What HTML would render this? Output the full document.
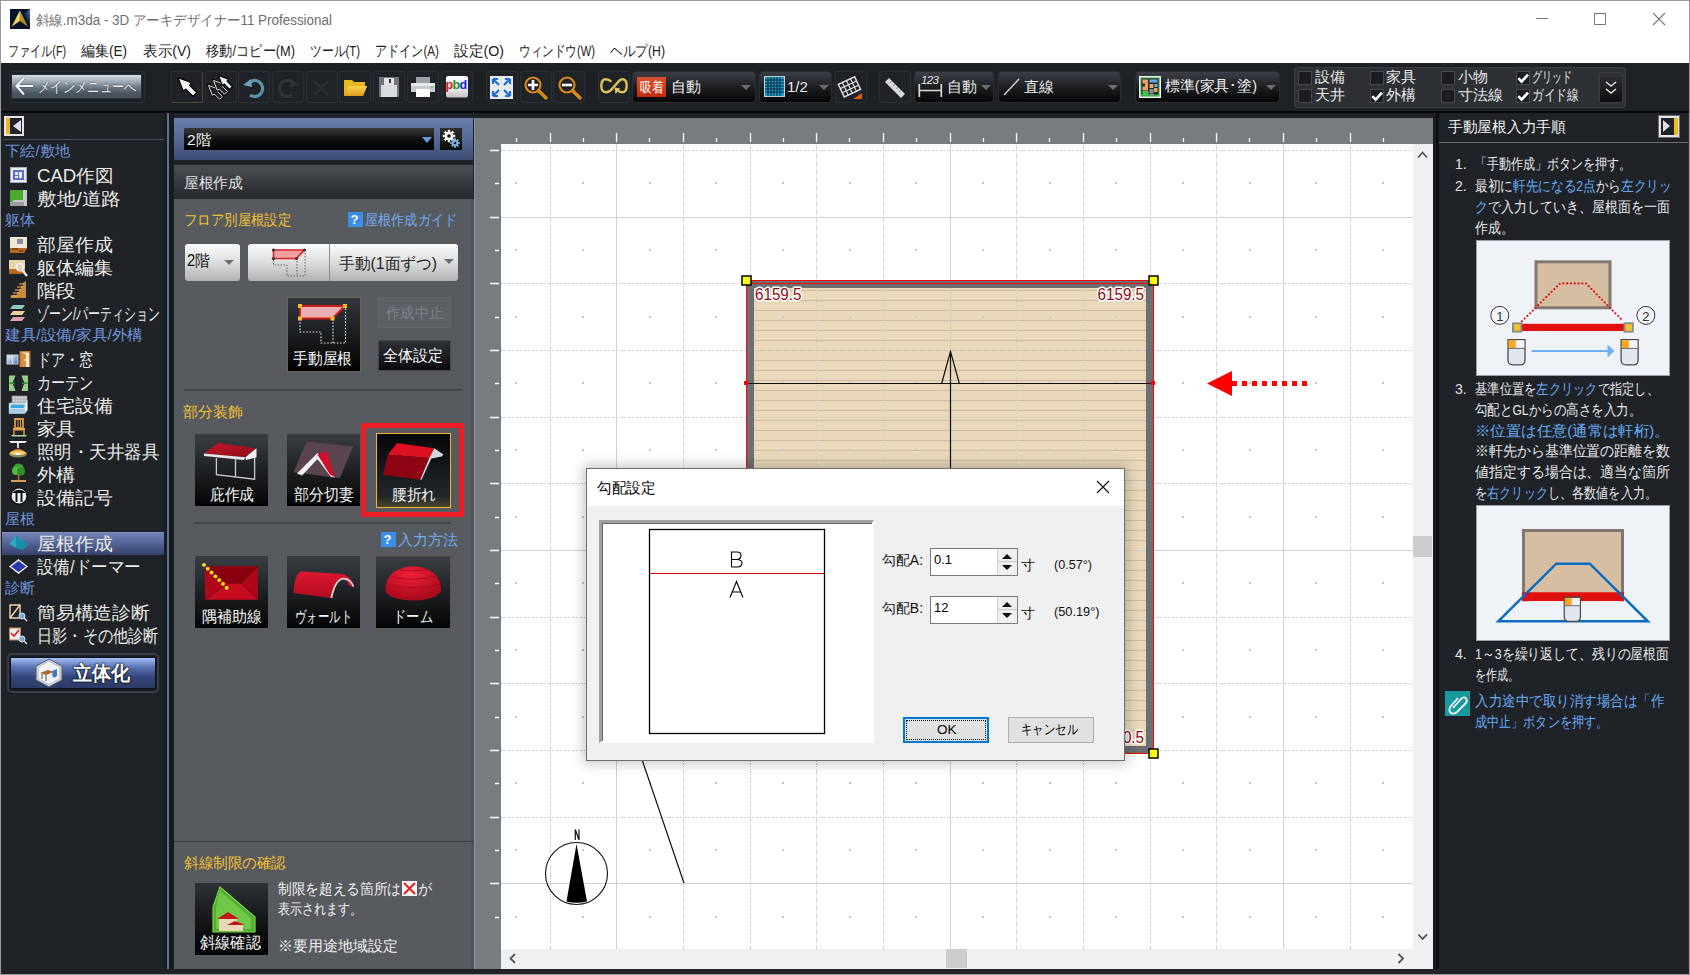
<!DOCTYPE html>
<html><head><meta charset="utf-8">
<style>
*{box-sizing:border-box;margin:0;padding:0}
html,body{width:1690px;height:975px;overflow:hidden;background:#fff;font-family:"Liberation Sans",sans-serif;position:relative}
.a{position:absolute}
svg.a{overflow:visible}
.t{position:absolute;white-space:nowrap;line-height:1}
.tbb{position:absolute;top:71px;width:32px;height:32px;border:1px solid #2b2f33;border-radius:3px;background:#1f2327}
.dd{position:absolute;top:71px;height:32px;border-radius:4px;border:1px solid #2a2e32;background:linear-gradient(#3c4046,#1a1c1f 55%,#050607)}
.ddar{position:absolute;top:84.5px;width:0;height:0;border-left:5px solid transparent;border-right:5px solid transparent;border-top:5px solid #6a6d71}
.cb{position:absolute;width:14px;height:14px;background:#1b1d20;border:1px solid #45484c}
.cb svg{position:absolute;left:-1px;top:-1px}
.cbt{font-size:14.5px;color:#e8e8e8}
</style></head><body>
<style>
.lh{position:absolute;left:5px;white-space:nowrap;line-height:1;font-size:14.5px;color:#6f95dc}
.li{position:absolute;left:37px;white-space:nowrap;line-height:1;font-size:18px;color:#eceae6}
</style>
<style>
.rbtn{position:absolute;width:73px;height:72px;background:linear-gradient(#3a3e43,#1e2124 50%,#040404)}
.rbl{font-size:15.5px;color:#f4f4f4}
</style>
<style>
.hn{position:absolute;left:1455px;white-space:nowrap;line-height:1;font-size:14px;color:#e4e4e4}
.hl{position:absolute;left:1475px;white-space:nowrap;line-height:1;font-size:14.5px;color:#e8e8e8}
.hl b{font-weight:normal;color:#68acf6}
</style>
<!-- TITLE BAR -->
<div class="a" style="left:0;top:0;width:1690px;height:1px;background:#9a9a9a"></div>
<div class="a" style="left:0;top:0;width:1px;height:975px;background:#9a9a9a"></div>
<div class="a" style="left:1689px;top:0;width:1px;height:975px;background:#9a9a9a"></div>
<svg class="a" style="left:10px;top:9px" width="20" height="20" viewBox="0 0 20 20"><defs><linearGradient id="lgb" x1="1" y1="0" x2="0.4" y2="0.7"><stop offset="0" stop-color="#4a7ac0"></stop><stop offset="1" stop-color="#06102a"></stop></linearGradient><linearGradient id="lgy" x1="0" y1="0" x2="0" y2="1"><stop offset="0" stop-color="#f8f0a0"></stop><stop offset="1" stop-color="#e8c040"></stop></linearGradient><linearGradient id="lgo" x1="0" y1="0" x2="0" y2="1"><stop offset="0" stop-color="#c8a830"></stop><stop offset="1" stop-color="#b07818"></stop></linearGradient></defs><rect width="20" height="20" fill="#06122a"></rect><path d="M20 0V16L13 6Z" fill="url(#lgb)"></path><path d="M9.9 1.5L1.6 17.8L9.9 12.1Z" fill="url(#lgy)"></path><path d="M9.9 1.5L18 17.8L9.9 12.1Z" fill="url(#lgo)"></path></svg>
<div class="t" style="left: 36px; top: 13px; font-size: 14px; color: rgb(110, 110, 110); --w: 296; transform: scaleX(0.9591); transform-origin: left center;">斜線.m3da - 3D アーキデザイナー11 Professional</div>
<div class="a" style="left:1536px;top:18px;width:12px;height:1px;background:#777"></div>
<div class="a" style="left:1594px;top:13px;width:12px;height:12px;border:1px solid #777"></div>
<svg class="a" style="left:1652px;top:12px" width="14" height="14" viewBox="0 0 14 14"><path d="M1 1L13 13M13 1L1 13" stroke="#777" stroke-width="1.1"></path></svg>
<!-- MENU -->
<div class="t" style="left: 8px; top: 44px; font-size: 14.5px; color: rgb(34, 34, 34); --w: 58; transform: scaleX(0.7387); transform-origin: left center;">ファイル(F)</div>
<div class="t" style="left: 81px; top: 44px; font-size: 14.5px; color: rgb(34, 34, 34); --w: 46; transform: scaleX(0.9322); transform-origin: left center;">編集(E)</div>
<div class="t" style="left: 143px; top: 44px; font-size: 14.5px; color: rgb(34, 34, 34); --w: 48; transform: scaleX(0.9728); transform-origin: left center;">表示(V)</div>
<div class="t" style="left: 206px; top: 44px; font-size: 14.5px; color: rgb(34, 34, 34); --w: 89; transform: scaleX(0.8832); transform-origin: left center;">移動/コピー(M)</div>
<div class="t" style="left: 310px; top: 44px; font-size: 14.5px; color: rgb(34, 34, 34); --w: 50; transform: scaleX(0.7872); transform-origin: left center;">ツール(T)</div>
<div class="t" style="left: 375px; top: 44px; font-size: 14.5px; color: rgb(34, 34, 34); --w: 64; transform: scaleX(0.8066); transform-origin: left center;">アドイン(A)</div>
<div class="t" style="left: 454px; top: 44px; font-size: 14.5px; color: rgb(34, 34, 34); --w: 50; transform: scaleX(0.9816); transform-origin: left center;">設定(O)</div>
<div class="t" style="left: 519px; top: 44px; font-size: 14.5px; color: rgb(34, 34, 34); --w: 76; transform: scaleX(0.7728); transform-origin: left center;">ウィンドウ(W)</div>
<div class="t" style="left: 610px; top: 44px; font-size: 14.5px; color: rgb(34, 34, 34); --w: 55; transform: scaleX(0.8443); transform-origin: left center;">ヘルプ(H)</div>
<!-- TOOLBAR -->
<div class="a" style="left:1px;top:63px;width:1688px;height:48px;background:#1e2226"></div>
<div class="a" style="left:1px;top:111px;width:1688px;height:2px;background:#08090a"></div>
<div class="a" style="left:9px;top:71px;width:136px;height:32px;border:1px solid #2b2f34;border-radius:3px"></div>
<div class="a" style="left:11px;top:74px;width:131px;height:25px;background:linear-gradient(#d4dce6,#a8b2bc 25%,#6c7884 55%,#4a5560 80%,#46515c);border:1px solid #2a3038"></div>
<svg class="a" style="left:14px;top:76px" width="20" height="20" viewBox="0 0 20 20"><path d="M2.5 10H19M10 2L2.5 10L10 18.5" fill="none" stroke="#2a2e34" stroke-width="3.6" opacity="0.35"></path><path d="M2.5 10H19M10 2L2.5 10L10 18.5" fill="none" stroke="#f4f4f4" stroke-width="2.2"></path></svg>
<div class="t" style="left: 37.5px; top: 79px; font-size: 15px; color: rgb(242, 242, 242); text-shadow: rgb(34, 34, 34) 0px 0px 1.5px; --w: 98.5; transform: scaleX(0.8208); transform-origin: left center;">メインメニューへ</div>
<div class="tbb" style="left:171px"></div>
<div class="a" style="left:172px;top:102px;width:30px;height:1px;background:#4f4a36"></div><div class="a" style="left:202px;top:72px;width:1px;height:31px;background:#4f4a36"></div>
<svg class="a" style="left:170px;top:68px" width="70" height="38" viewBox="170 68 70 38"><path d="M178.10 77.60L191.49 82.64L189.64 85.36L196.82 92.54L193.04 96.32L185.86 89.14L183.14 90.99Z" fill="#f2f2f6" stroke="#000" stroke-width="1.2" stroke-linejoin="round"></path></svg>
<div class="tbb" style="left:205px"></div>
<svg class="a" style="left:170px;top:68px" width="70" height="38" viewBox="170 68 70 38"><path d="M208.50 85.40L218.44 89.14L217.07 91.16L222.40 96.49L219.59 99.30L214.26 93.97L212.24 95.34Z" fill="#1f2327" stroke="#000" stroke-width="2.2"></path><path d="M208.50 85.40L218.44 89.14L217.07 91.16L222.40 96.49L219.59 99.30L214.26 93.97L212.24 95.34Z" fill="#1f2327" stroke="#d8d8d8" stroke-width="1"></path><path d="M213.50 80.40L223.44 84.14L222.07 86.16L227.40 91.49L224.59 94.30L219.26 88.97L217.24 90.34Z" fill="#1f2327" stroke="#000" stroke-width="2.2"></path><path d="M213.50 80.40L223.44 84.14L222.07 86.16L227.40 91.49L224.59 94.30L219.26 88.97L217.24 90.34Z" fill="#1f2327" stroke="#e0e0e0" stroke-width="1"></path><path d="M218.50 75.50L228.44 79.24L227.07 81.26L232.40 86.59L229.59 89.40L224.26 84.07L222.24 85.44Z" fill="#f4f4f4" stroke="#000" stroke-width="1.2"></path></svg>
<div class="tbb" style="left:238px"></div>
<svg class="a" style="left:242px;top:76px" width="24" height="24" viewBox="0 0 24 24"><path d="M6 8 A8 8 0 1 1 8 19" fill="none" stroke="#5f93ad" stroke-width="3.2"></path><path d="M1 9L9 3L10 11Z" fill="#6fa3bd"></path></svg>
<div class="tbb" style="left:272px"></div>
<svg class="a" style="left:276px;top:76px" width="24" height="24" viewBox="0 0 24 24"><path d="M18 8 A8 8 0 1 0 16 19" fill="none" stroke="#31353a" stroke-width="3"></path><path d="M23 9L15 3L14 11Z" fill="#31353a"></path></svg>
<div class="tbb" style="left:306px"></div>
<svg class="a" style="left:311px;top:78px" width="20" height="20" viewBox="0 0 20 20"><path d="M3 3L17 17M17 3L3 17" stroke="#2c3035" stroke-width="2.4"></path></svg>
<div class="tbb" style="left:339px"></div>
<svg class="a" style="left:343px;top:76px" width="25" height="22" viewBox="0 0 25 22"><path d="M1 4H9L11 6H22V10H5L1 20Z" fill="#e8b820"></path><path d="M5 10H24L20 20H1Z" fill="#f2b43a"></path><path d="M5 10H24L20 20H1Z" fill="url(#fg)"></path><defs><linearGradient id="fg" x1="0" y1="0" x2="0" y2="1"><stop offset="0" stop-color="#ffd24a"></stop><stop offset="1" stop-color="#d99a20"></stop></linearGradient></defs></svg>
<div class="tbb" style="left:373px"></div>
<svg class="a" style="left:378px;top:76px" width="22" height="22" viewBox="0 0 22 22"><rect x="1" y="1" width="20" height="20" fill="#6f757b"></rect><rect x="3" y="9" width="16" height="12" fill="#d9dcdf"></rect><rect x="6" y="2" width="10" height="7" fill="#e4e6e8"></rect><rect x="11" y="3" width="2" height="4" fill="#333"></rect></svg>
<div class="tbb" style="left:407px"></div>
<svg class="a" style="left:410px;top:76px" width="26" height="22" viewBox="0 0 26 22"><rect x="6" y="1" width="14" height="6" fill="#9aa0a6"></rect><rect x="1" y="7" width="24" height="9" fill="#c8ccd0"></rect><rect x="1" y="7" width="24" height="3" fill="#e6e8ea"></rect><rect x="6" y="13" width="14" height="8" fill="#fff"></rect><rect x="21" y="10" width="2" height="2" fill="#5c5"></rect></svg>
<div class="tbb" style="left:441px"></div>
<svg class="a" style="left:446px;top:76px" width="22" height="22" viewBox="0 0 22 22"><defs><linearGradient id="pbg" x1="0" y1="0" x2="0" y2="1"><stop offset="0" stop-color="#ffffff"></stop><stop offset="0.6" stop-color="#e8e8e8"></stop><stop offset="1" stop-color="#c4c4c4"></stop></linearGradient></defs><rect x="0" y="0" width="22" height="21.5" rx="2" fill="url(#pbg)"></rect><text x="-0.5" y="13.3" font-family="Liberation Sans" font-weight="bold" font-size="12.5" letter-spacing="-0.6" fill="#d81818">p<tspan fill="#189828">b</tspan><tspan fill="#2020e0">d</tspan></text></svg>
<div class="tbb" style="left:486px"></div>
<svg class="a" style="left:490px;top:76px" width="23" height="23" viewBox="0 0 23 23"><rect x="0" y="0" width="23" height="23" fill="#e7ebef"></rect><g stroke="#1f6fd6" stroke-width="2.2" fill="none"><path d="M3 3L9 9M3 3H8M3 3V8"></path><path d="M20 3L14 9M20 3H15M20 3V8"></path><path d="M3 20L9 14M3 20H8M3 20V15"></path><path d="M20 20L14 14M20 20H15M20 20V15"></path></g></svg>
<div class="tbb" style="left:520px"></div>
<svg class="a" style="left:523px;top:75px" width="26" height="26" viewBox="0 0 26 26"><circle cx="10" cy="10" r="7.5" fill="none" stroke="#d98a14" stroke-width="2.2"></circle><path d="M15.5 15.5L23 23" stroke="#d98a14" stroke-width="3.4" stroke-linecap="round"></path><path d="M10 5V15M5 10H15" stroke="#fff" stroke-width="2.6"></path></svg>
<div class="tbb" style="left:553px"></div>
<svg class="a" style="left:557px;top:75px" width="26" height="26" viewBox="0 0 26 26"><circle cx="10" cy="10" r="7.5" fill="none" stroke="#d98a14" stroke-width="2.2"></circle><path d="M15.5 15.5L23 23" stroke="#d98a14" stroke-width="3.4" stroke-linecap="round"></path><path d="M5 10H15" stroke="#fff" stroke-width="2.6"></path></svg>
<div class="tbb" style="left:598px"></div>
<svg class="a" style="left:600px;top:78px" width="28" height="17" viewBox="0 0 28 17"><path d="M11.3 3.6C9.5 1.8 7.5 1.3 5.5 1.3C2.5 1.3 1.3 4.5 1.3 7.8C1.3 11.5 3 14.3 6 14.3C9 14.3 10.5 12.8 12.2 10.8L19 3C20.3 1.7 21.5 1.3 22.5 1.3C25.5 1.3 26.7 4.3 26.7 7.8C26.7 11.5 25 14.3 22 14.3C20.3 14.3 19.2 13.6 18.3 12.6" fill="none" stroke="#dcc058" stroke-width="2.5"></path><path d="M14.6 9.6L20.2 10.6L15.5 16Z" fill="#e8cc60"></path></svg>
<div class="dd" style="left:632px;width:124px"></div>
<div class="a" style="left:637px;top:77px;width:29px;height:20px;background:linear-gradient(#d85434,#c42a04)"></div>
<div class="t" style="left: 639.5px; top: 79.5px; font-size: 14px; color: rgb(255, 255, 255); --w: 23.5; transform: scaleX(0.8393); transform-origin: left center;">吸着</div>
<div class="t" style="left:671px;top:79px;font-size:15px;color:#eee">自動</div>
<div class="ddar" style="left:741px"></div>
<div class="dd" style="left:759px;width:73px"></div>
<svg class="a" style="left:764px;top:76px" width="21" height="21" viewBox="0 0 21 21"><rect x="0.5" y="0.5" width="20" height="20" fill="#1aa0d0" stroke="#ccc"></rect><g stroke="#123" stroke-width="1"><path d="M4 1V20M7 1V20M10 1V20M13 1V20M16 1V20M1 4H20M1 7H20M1 10H20M1 13H20M1 16H20"></path></g></svg>
<div class="t" style="left:787px;top:79px;font-size:15px;color:#eee">1/2</div>
<div class="ddar" style="left:818.5px"></div>
<div class="tbb" style="left:835px"></div>
<svg class="a" style="left:838px;top:75px" width="26" height="26" viewBox="0 0 26 26"><g transform="rotate(-25 11 11)"><rect x="2" y="5" width="18" height="14" fill="none" stroke="#ddd" stroke-width="1.5"></rect><path d="M6.5 5V19M11 5V19M15.5 5V19M2 9.7H20M2 14.3H20" stroke="#ddd" stroke-width="1.2"></path></g><path d="M15 24L24 18V24Z" fill="#e06010"></path></svg>
<div class="tbb" style="left:879px"></div>
<svg class="a" style="left:882px;top:75px" width="26" height="26" viewBox="0 0 26 26"><path d="M3 7L7 3L23 19L19 23Z" fill="#d8d8d8"></path><path d="M8 8L10 6M11 11L13 9M14 14L16 12M17 17L19 15" stroke="#888" stroke-width="0.8"></path></svg>
<div class="dd" style="left:914px;width:80px"></div>
<svg class="a" style="left:917px;top:74px" width="28" height="26" viewBox="0 0 28 26"><text x="4" y="10.2" font-family="Liberation Sans" font-style="italic" font-size="11.5" letter-spacing="-0.6" fill="#e4e4e4">123</text><path d="M2.3 10V23M24.3 10V23M2.3 16.5H24.3" stroke="#dcdcdc" stroke-width="1.7"></path></svg>
<div class="t" style="left:947px;top:79px;font-size:15px;color:#eee">自動</div>
<div class="ddar" style="left:981px"></div>
<div class="dd" style="left:998px;width:123px"></div>
<svg class="a" style="left:1002px;top:78px" width="20" height="18" viewBox="0 0 20 18"><path d="M2 17L17 1" stroke="#ccc" stroke-width="1.5"></path></svg>
<div class="t" style="left:1024px;top:79px;font-size:15px;color:#eee">直線</div>
<div class="ddar" style="left:1107.5px"></div>
<div class="dd" style="left:1135px;width:145px"></div>
<svg class="a" style="left:1139px;top:76px" width="22" height="22" viewBox="0 0 22 22"><rect x="0.7" y="0.7" width="20.6" height="20.6" fill="#3cb048" stroke="#f4f4f4" stroke-width="1.4"></rect><rect x="2.5" y="2.5" width="17" height="16" fill="#262a2c"></rect><path d="M3.5 3.5H9V14.5H3.5V10.5H6V7.5H3.5Z" fill="#e8a060"></path><rect x="10.5" y="3.5" width="8" height="3" fill="#60a8e8"></rect><rect x="15.5" y="8" width="3" height="3" fill="#60a8e8"></rect><rect x="10.5" y="8" width="4" height="4" fill="#e8a060"></rect><rect x="15" y="12" width="3.5" height="4" fill="#e8a060"></rect><rect x="10.5" y="13" width="4" height="4" fill="#8a9098"></rect><rect x="3.5" y="15" width="6" height="4" fill="#4cc050"></rect><rect x="10.5" y="17.5" width="4" height="1.5" fill="#8a9098"></rect></svg>
<div class="t" style="left: 1164.5px; top: 79px; font-size: 14.5px; color: rgb(238, 238, 238); --w: 92; transform: scaleX(0.9927); transform-origin: left center;">標準(家具･塗)</div>
<div class="ddar" style="left:1266px"></div>
<!-- checkbox group -->
<div class="a" style="left:1294px;top:67px;width:332px;height:41px;background:#2d3034;border:1px solid #3a3d41;border-radius:3px"></div>
<div class="cb" style="left:1298px;top:71px"></div><div class="t cbt" style="left:1315px;top:70px">設備</div>
<div class="cb" style="left:1298px;top:89px"></div><div class="t cbt" style="left:1315px;top:88px">天井</div>
<div class="cb" style="left:1370px;top:71px"></div><div class="t cbt" style="left:1386px;top:70px">家具</div>
<div class="cb" style="left:1370px;top:89px"><svg width="14" height="14" viewBox="0 0 14 14"><path d="M2.3 7.2L5.6 10.6L12 3.6" fill="none" stroke="#fff" stroke-width="2.6"></path></svg></div><div class="t cbt" style="left:1386px;top:88px">外構</div>
<div class="cb" style="left:1441px;top:71px"></div><div class="t cbt" style="left:1458px;top:70px">小物</div>
<div class="cb" style="left:1441px;top:89px"></div><div class="t cbt" style="left:1458px;top:88px">寸法線</div>
<div class="cb" style="left:1516px;top:71px"><svg width="14" height="14" viewBox="0 0 14 14"><path d="M2.3 7.2L5.6 10.6L12 3.6" fill="none" stroke="#fff" stroke-width="2.6"></path></svg></div><div class="t cbt" style="left: 1532px; top: 70px; --w: 40; transform: scaleX(0.6667); transform-origin: left center;">グリッド</div>
<div class="cb" style="left:1516px;top:89px"><svg width="14" height="14" viewBox="0 0 14 14"><path d="M2.3 7.2L5.6 10.6L12 3.6" fill="none" stroke="#fff" stroke-width="2.6"></path></svg></div><div class="t cbt" style="left: 1532px; top: 88px; --w: 47; transform: scaleX(0.7833); transform-origin: left center;">ガイド線</div>
<div class="a" style="left:1599px;top:72px;width:24px;height:31px;background:linear-gradient(#303338,#0c0d0e);border:1px solid #3a3d41;border-radius:2px"></div>
<svg class="a" style="left:1604px;top:79px" width="14" height="18" viewBox="0 0 14 18"><path d="M2 3L7 7L12 3M2 10L7 14L12 10" fill="none" stroke="#ddd" stroke-width="1.6"></path></svg>
<!-- LEFT NAV -->
<div class="a" style="left:1px;top:113px;width:166px;height:857px;background:#1f2328"></div>
<div class="a" style="left:164px;top:113px;width:3px;height:857px;background:#1a1d21"></div>
<div class="a" style="left:167px;top:113px;width:2px;height:857px;background:#5c6f96"></div>
<div class="a" style="left:169px;top:113px;width:5px;height:857px;background:#181b1e"></div>
<div class="a" style="left:1px;top:969px;width:1688px;height:5px;background:#1f2328"></div>
<div class="a" style="left:0;top:974px;width:1690px;height:1px;background:#9a9a9a"></div>
<!-- toggle -->
<div class="a" style="left:4px;top:116px;width:20px;height:20px;border:2px solid #e6e6e6;background:#1f2328"></div>
<div class="a" style="left:6px;top:118px;width:4px;height:16px;background:#f0b820"></div>
<div class="a" style="left:13px;top:120px;width:0;height:0;border-top:6px solid transparent;border-bottom:6px solid transparent;border-right:8px solid #dde0ea"></div>
<div class="a" style="left:2px;top:139px;width:162px;height:1px;background:#4a4e54"></div>
<div class="lh" style="top: 144px; --w: 65; transform: scaleX(1.0151); transform-origin: left center;">下絵/敷地</div>
<div class="li" style="top: 167px; --w: 76.5; transform: scaleX(1.0336); transform-origin: left center;">CAD作図</div>
<div class="li" style="top: 190px; --w: 84; transform: scaleX(1.0907); transform-origin: left center;">敷地/道路</div>
<div class="lh" style="top: 213px; --w: 30; transform: scaleX(1); transform-origin: left center;">躯体</div>
<div class="li" style="top: 236px; --w: 75.5; transform: scaleX(1.0486); transform-origin: left center;">部屋作成</div>
<div class="li" style="top: 259px; --w: 75.5; transform: scaleX(1.0486); transform-origin: left center;">躯体編集</div>
<div class="li" style="top: 282px; --w: 39; transform: scaleX(1.0833); transform-origin: left center;">階段</div>
<div class="li" style="top: 305px; --w: 123; transform: scaleX(0.6648); transform-origin: left center;">ゾーン/パーティション</div>
<div class="lh" style="top: 328px; --w: 138; transform: scaleX(1.0447); transform-origin: left center;">建具/設備/家具/外構</div>
<div class="li" style="top: 351px; --w: 56.5; transform: scaleX(0.7847); transform-origin: left center;">ドア・窓</div>
<div class="li" style="top: 374px; --w: 56.5; transform: scaleX(0.7847); transform-origin: left center;">カーテン</div>
<div class="li" style="top: 397px; --w: 75.5; transform: scaleX(1.0486); transform-origin: left center;">住宅設備</div>
<div class="li" style="top: 420px; --w: 38.5; transform: scaleX(1.0694); transform-origin: left center;">家具</div>
<div class="li" style="top: 443px; --w: 122.5; transform: scaleX(0.9722); transform-origin: left center;">照明・天井器具</div>
<div class="li" style="top: 466px; --w: 38.5; transform: scaleX(1.0694); transform-origin: left center;">外構</div>
<div class="li" style="top: 489px; --w: 75.5; transform: scaleX(1.0486); transform-origin: left center;">設備記号</div>
<div class="lh" style="top: 512px; --w: 30; transform: scaleX(1); transform-origin: left center;">屋根</div>
<div class="a" style="left:2px;top:532px;width:162px;height:23px;background:linear-gradient(#7384b8,#4c5b8c 60%,#36426c);border-top:1px solid #8090c0"></div>
<div class="li" style="top: 535px; --w: 75.5; transform: scaleX(1.0486); transform-origin: left center;">屋根作成</div>
<div class="li" style="top: 558px; --w: 103.5; transform: scaleX(0.9158); transform-origin: left center;">設備/ドーマー</div>
<div class="lh" style="top: 581px; --w: 30; transform: scaleX(1); transform-origin: left center;">診断</div>
<div class="li" style="top: 604px; --w: 112.5; transform: scaleX(1.0417); transform-origin: left center;">簡易構造診断</div>
<div class="li" style="top: 627px; --w: 121.5; transform: scaleX(0.8438); transform-origin: left center;">日影・その他診断</div>
<!-- icons -->
<svg class="a" style="left:10px;top:167px" width="17" height="16" viewBox="0 0 17 16"><rect x="0.5" y="0.5" width="16" height="15" fill="#e8ecf4" stroke="#aab"></rect><rect x="3" y="3" width="11" height="10" fill="#5b6fc8"></rect><path d="M5 5H8V8H5ZM9 5H12V11H9ZM5 9H8V11H5Z" fill="#e8ecf8"></path></svg>
<svg class="a" style="left:10px;top:190px" width="17" height="16" viewBox="0 0 17 16"><rect x="0" y="0" width="17" height="16" fill="#c8cacc"></rect><path d="M0 0H13V10L4 10L0 14Z" fill="#4caa30"></path><path d="M0 12H14V16H0Z" fill="#9a9c9e"></path></svg>
<svg class="a" style="left:10px;top:237px" width="17" height="16" viewBox="0 0 17 16"><rect x="0" y="0" width="17" height="12" fill="#f0e8d4"></rect><rect x="7" y="2" width="6" height="5" fill="#8890a0"></rect><path d="M0 11H17L14 16H0Z" fill="#b86820"></path><path d="M2 12H8M9 14H13" stroke="#5a3010" stroke-width="1"></path></svg>
<svg class="a" style="left:9px;top:259px" width="20" height="18" viewBox="0 0 20 18"><rect x="0" y="1" width="16" height="12" fill="#e8d4a8"></rect><path d="M0 10H16L13 15H0Z" fill="#b86820"></path><circle cx="11" cy="8" r="3.5" fill="none" stroke="#eee" stroke-width="2"></circle><path d="M13 11L18 17" stroke="#eee" stroke-width="2.2"></path></svg>
<svg class="a" style="left:9px;top:281px" width="18" height="17" viewBox="0 0 18 17"><path d="M17 0V17H1L3 14H8V11H10V8H12V5H14V2Z" fill="#c88a3a"></path><path d="M2 15H8M4 12H10M6 9H12M8 6H14M10 3H15" stroke="#f0b060" stroke-width="1.2"></path></svg>
<svg class="a" style="left:9px;top:305px" width="18" height="17" viewBox="0 0 18 17"><path d="M4 0H16L13 4H1Z" fill="#8cc8c0"></path><path d="M4 6H16L13 10H1Z" fill="#e8d0a0"></path><path d="M4 12H16L13 16H1Z" fill="#e0a0b0"></path></svg>
<svg class="a" style="left:6px;top:350px" width="26" height="18" viewBox="0 0 26 18"><defs><linearGradient id="wg" x1="0" y1="0" x2="1" y2="1"><stop offset="0" stop-color="#f0f4fa"></stop><stop offset="1" stop-color="#4a78b8"></stop></linearGradient></defs><rect x="1" y="5" width="11" height="9" fill="url(#wg)" stroke="#c8d0d8" stroke-width="1"></rect><path d="M6.5 5V14" stroke="#e8eef4" stroke-width="1"></path><rect x="13.5" y="1" width="11" height="16" fill="#c07828"></rect><rect x="15" y="2.5" width="8" height="14.5" fill="#f4ead8"></rect><path d="M15 2.5L20 4.5V17H15Z" fill="#d89040"></path><circle cx="19" cy="10" r="0.8" fill="#fff"></circle></svg>
<svg class="a" style="left:8px;top:375px" width="21" height="17" viewBox="0 0 21 17"><path d="M1 0.5H7.5Q6 5 4.5 8Q6 11 7.5 16H1Z" fill="#98cc88"></path><path d="M13.5 0.5H20V16H13.5Q15 11 16.5 8Q15 5 13.5 0.5Z" fill="#98cc88"></path><path d="M1.5 8L7 8.5M14 8.5L19.5 8" stroke="#2c8a38" stroke-width="1.6"></path></svg>
<svg class="a" style="left:8px;top:395px" width="20" height="19" viewBox="0 0 20 19"><path d="M4 1H19V10H4Z" fill="#d8dce0" stroke="#888" stroke-width="0.8"></path><path d="M7 1V10M10 1V10M13 1V10M16 1V10M4 4H19M4 7H19" stroke="#999" stroke-width="0.6"></path><path d="M1 8H17L19.5 5V15L17 18.5H1Z" fill="#eef2f6" stroke="#8aa" stroke-width="0.6"></path><path d="M3 9.5H16L17 11L15.5 13H2.5Z" fill="#38a8e0"></path><path d="M1 13.5H17V18.5H1Z" fill="#a8cce8"></path></svg>
<svg class="a" style="left:10px;top:418px" width="18" height="19" viewBox="0 0 18 19"><path d="M1 17H17L16 18.5H2Z" fill="#a8d8a0"></path><path d="M5 1H13V10H5Z" fill="none" stroke="#d89848" stroke-width="1.8"></path><path d="M8 2V9M10.5 2V9" stroke="#d89848" stroke-width="1"></path><path d="M3 10H15V12.5H3Z" fill="#e8a850"></path><path d="M4 12.5V17M14 12.5V17" stroke="#c88030" stroke-width="1.8"></path></svg>
<svg class="a" style="left:8px;top:440px" width="20" height="19" viewBox="0 0 20 19"><path d="M1 1H19L17 3H3Z" fill="#f0f0f0"></path><path d="M9 3H11V8H9Z" fill="#ccc"></path><ellipse cx="10" cy="14" rx="9" ry="3.5" fill="#f8e8a0" opacity="0.5"></ellipse><path d="M2 13Q10 5 18 13Z" fill="#f08830"></path><ellipse cx="10" cy="13" rx="8" ry="2" fill="#ffcc70"></ellipse><rect x="8" y="13" width="4" height="2" fill="#fff"></rect></svg>
<svg class="a" style="left:10px;top:463px" width="17" height="20" viewBox="0 0 17 20"><circle cx="8.5" cy="6" r="5.5" fill="#3aa030"></circle><circle cx="6" cy="8" r="4" fill="#58b840"></circle><circle cx="11" cy="8.5" r="4" fill="#2c9028"></circle><rect x="7.8" y="11" width="1.6" height="6" fill="#a86828"></rect><rect x="1" y="17" width="15" height="2" fill="#d8a060"></rect></svg>
<svg class="a" style="left:10px;top:487px" width="18" height="18" viewBox="0 0 18 18"><circle cx="9" cy="9" r="8.2" fill="#f4f4f4" stroke="#111" stroke-width="1.6"></circle><path d="M2.5 6H15.5A8 8 0 0 0 2.5 6Z" fill="#111"></path><rect x="5.5" y="5" width="2" height="10" fill="#111"></rect><rect x="10.5" y="5" width="2" height="10" fill="#111"></rect></svg>
<svg class="a" style="left:9px;top:536px" width="19" height="14" viewBox="0 0 19 14"><path d="M0 8L7 0L14 4L7 12Z" fill="#28a8c0"></path><path d="M7 0L19 8L14 14L7 12Z" fill="#1890a8"></path></svg>
<svg class="a" style="left:9px;top:559px" width="19" height="15" viewBox="0 0 19 15"><path d="M0 7.5L9.5 0L19 7.5L9.5 15Z" fill="#e8e8f0"></path><path d="M2 7.5L9.5 2L17 7.5L9.5 13Z" fill="#2838a8"></path></svg>
<svg class="a" style="left:9px;top:604px" width="19" height="17" viewBox="0 0 19 17"><path d="M1 1H11V14H1Z" fill="none" stroke="#f0d8b0" stroke-width="1.4"></path><path d="M1 14L11 1" stroke="#f0d8b0" stroke-width="1.4"></path><circle cx="13" cy="12" r="3" fill="#7aa8e0" stroke="#d0e0f0"></circle><path d="M15 14L18 17" stroke="#d0e0f0" stroke-width="1.4"></path></svg>
<svg class="a" style="left:9px;top:627px" width="19" height="17" viewBox="0 0 19 17"><rect x="0.5" y="1" width="11" height="12" fill="#eee" stroke="#c88040"></rect><path d="M2 6L5 9L10 3" stroke="#d02020" stroke-width="1.6" fill="none"></path><circle cx="13" cy="12" r="3" fill="#7aa8e0" stroke="#d0e0f0"></circle><path d="M15 14L18 17" stroke="#d0e0f0" stroke-width="1.4"></path></svg>
<!-- 立体化 -->
<div class="a" style="left:7px;top:653px;width:152px;height:40px;border:2px solid #3a3e44;border-radius:5px;background:#1a1d21"></div>
<div class="a" style="left:10px;top:657px;width:146px;height:32px;background:linear-gradient(#a4c0f6,#5c74b4 30%,#34467c 62%,#2c3a64);border:1px solid #0c1020"></div>
<svg class="a" style="left:34px;top:658px" width="30" height="30" viewBox="0 0 30 30"><path d="M15 1L28 8V22L15 29L2 22V8Z" fill="#c8ccd4" stroke="#555a66"></path><path d="M15 4L25 9.5V20.5L15 26L5 20.5V9.5Z" fill="#f0f2f6"></path><path d="M6 15L14 12L20 14L12 17Z" fill="#a86a30"></path><path d="M8 16V21M12 17V23M19 15V19" stroke="#555" stroke-width="1"></path><path d="M18 13L23 11V18L20 20Z" fill="#3878c8"></path></svg>
<div class="t" style="left: 73px; top: 663px; font-size: 20px; font-weight: bold; color: rgb(255, 255, 255); text-shadow: rgb(0, 0, 0) 0px 0px 2px, rgb(0, 0, 0) 0px 0px 2px; --w: 57; transform: scaleX(0.95); transform-origin: left center;">立体化</div>
<!-- ROOF PANEL -->
<div class="a" style="left:174px;top:113px;width:300px;height:856px;background:#1f2328"></div>
<div class="a" style="left:174px;top:118px;width:299px;height:42px;background:linear-gradient(#6b7fae,#566a98 50%,#3c4c72)"></div>
<div class="a" style="left:184px;top:128px;width:250px;height:22px;background:linear-gradient(#3a3a3a,#111 50%,#000)"></div>
<div class="t" style="left: 187px; top: 132px; font-size: 15px; color: rgb(244, 244, 244); --w: 24; transform: scaleX(1.0281); transform-origin: left center;">2階</div>
<div class="a" style="left:422px;top:137px;width:0;height:0;border-left:5px solid transparent;border-right:5px solid transparent;border-top:6px solid #6898e0"></div>
<div class="a" style="left:440px;top:128px;width:22px;height:22px;background:linear-gradient(#2e2e2e,#0a0a0a)"></div>
<svg class="a" style="left:441px;top:129px" width="20" height="20" viewBox="0 0 20 20"><g fill="#f4f4f4"><circle cx="8" cy="7" r="4.2"></circle><g transform="translate(8 7)"><rect x="-1.2" y="-6.2" width="2.4" height="12.4"></rect><rect x="-1.2" y="-6.2" width="2.4" height="12.4" transform="rotate(45)"></rect><rect x="-1.2" y="-6.2" width="2.4" height="12.4" transform="rotate(90)"></rect><rect x="-1.2" y="-6.2" width="2.4" height="12.4" transform="rotate(135)"></rect></g></g><circle cx="8" cy="7" r="1.8" fill="#111"></circle><g fill="#7ab0e0"><circle cx="14" cy="14" r="3.2"></circle><g transform="translate(14 14)"><rect x="-0.9" y="-4.8" width="1.8" height="9.6"></rect><rect x="-0.9" y="-4.8" width="1.8" height="9.6" transform="rotate(45)"></rect><rect x="-0.9" y="-4.8" width="1.8" height="9.6" transform="rotate(90)"></rect><rect x="-0.9" y="-4.8" width="1.8" height="9.6" transform="rotate(135)"></rect></g></g><circle cx="14" cy="14" r="1.3" fill="#111"></circle></svg>
<div class="a" style="left:174px;top:165px;width:299px;height:34px;background:linear-gradient(#4b4f54,#25282c)"></div>
<div class="t" style="left: 184px; top: 175px; font-size: 15px; color: rgb(224, 224, 224); --w: 59; transform: scaleX(0.9833); transform-origin: left center;">屋根作成</div>
<div class="a" style="left:174px;top:199px;width:299px;height:770px;background:#575b60"></div>
<div class="a" style="left:471px;top:199px;width:3px;height:770px;background:linear-gradient(90deg,#54585d,#4a4e53)"></div><div class="a" style="left:473px;top:113px;width:1px;height:86px;background:#1f2328"></div>
<div class="t" style="left: 183.5px; top: 212px; font-size: 15px; color: rgb(244, 192, 48); --w: 107; transform: scaleX(0.8917); transform-origin: left center;">フロア別屋根設定</div>
<div class="a" style="left:348px;top:212px;width:15px;height:15px;background:#3a8ee8"></div>
<div class="t" style="left:350.5px;top:213px;font-size:13px;font-weight:bold;color:#fff">?</div>
<div class="t" style="left: 365px; top: 212px; font-size: 15px; color: rgb(114, 170, 240); --w: 92; transform: scaleX(0.8762); transform-origin: left center;">屋根作成ガイド</div>
<!-- floor dropdown -->
<div class="a" style="left:185px;top:244px;width:55px;height:37px;border-radius:3px;background:linear-gradient(#fbfbfb,#e0e0e0 45%,#b0b2b4)"></div>
<div class="t" style="left: 187px; top: 253px; font-size: 16px; color: rgb(17, 17, 17); --w: 23; transform: scaleX(0.9235); transform-origin: left center;">2階</div>
<div class="a" style="left:224px;top:260px;width:0;height:0;border-left:5px solid transparent;border-right:5px solid transparent;border-top:5px solid #6e7074"></div>
<div class="a" style="left:248px;top:244px;width:210px;height:37px;border-radius:3px;background:linear-gradient(#fbfbfb,#e0e0e0 45%,#b0b2b4)"></div>
<div class="a" style="left:329px;top:244px;width:1px;height:37px;background:#8a8c90"></div>
<svg class="a" style="left:270px;top:247px" width="40" height="32" viewBox="0 0 40 32"><path d="M3.5 4V18H17V29H35V4" fill="none" stroke="#666" stroke-width="1" stroke-dasharray="1.5 1.5"></path><path d="M27 14V29" fill="none" stroke="#666" stroke-width="1" stroke-dasharray="1.5 1.5"></path><path d="M3.5 3H34.5L26.5 11.5H3.5Z" fill="#f0a0a0" stroke="#d82020" stroke-width="1.6"></path><g fill="#333"><circle cx="3.5" cy="3" r="1.6"></circle><circle cx="34.5" cy="3" r="1.6"></circle><circle cx="26.5" cy="11.5" r="1.6"></circle><circle cx="3.5" cy="11.5" r="1.6"></circle></g></svg>
<div class="t" style="left: 338.5px; top: 256px; font-size: 16px; color: rgb(34, 34, 34); --w: 98; transform: scaleX(0.9843); transform-origin: left center;">手動(1面ずつ)</div>
<div class="a" style="left:444px;top:259px;width:0;height:0;border-left:5px solid transparent;border-right:5px solid transparent;border-top:5px solid #6e7074"></div>
<!-- 手動屋根 -->
<div class="a" style="left:287px;top:297px;width:74px;height:75px;background:linear-gradient(#33373c,#1a1d20 50%,#030303);border:1px solid #6a6450"></div>
<svg class="a" style="left:287px;top:297px" width="74" height="75" viewBox="0 0 74 75"><path d="M13 22V35H34V46H58.5V9M46 22V46" fill="none" stroke="#ddd" stroke-width="1.2" stroke-dasharray="1.6 1.6"></path><path d="M13 9H58L45.5 21.5H13Z" fill="#e8b0b0" stroke="#d01818" stroke-width="1.8"></path><g fill="#f4c020"><rect x="11" y="7" width="4" height="4"></rect><rect x="56" y="7" width="4" height="4"></rect><rect x="43.5" y="19.5" width="4" height="4"></rect><rect x="11" y="19.5" width="4" height="4"></rect></g></svg>
<div class="t" style="left: 293px; top: 351px; font-size: 15.5px; color: rgb(250, 250, 250); --w: 59; transform: scaleX(0.9219); transform-origin: left center;">手動屋根</div>
<div class="a" style="left:378px;top:297px;width:73px;height:31px;background:#5d6166;border:1px solid #62666b"></div>
<div class="t" style="left: 385.5px; top: 305px; font-size: 15px; color: rgb(126, 130, 134); --w: 57; transform: scaleX(0.95); transform-origin: left center;">作成中止</div>
<div class="a" style="left:378px;top:340px;width:73px;height:31px;background:linear-gradient(#2e3136,#0a0b0c);border:1px solid #45494e"></div>
<div class="t" style="left: 383px; top: 348px; font-size: 15.5px; color: rgb(250, 250, 250); --w: 60; transform: scaleX(0.9375); transform-origin: left center;">全体設定</div>
<div class="a" style="left:184px;top:389px;width:278px;height:2px;background:#45494e"></div>
<div class="t" style="left: 183px; top: 404px; font-size: 15px; color: rgb(244, 192, 48); --w: 60.5; transform: scaleX(1.0083); transform-origin: left center;">部分装飾</div>
<!-- decoration buttons -->
<div class="rbtn" style="left:195px;top:434px"></div>
<div class="rbtn" style="left:287px;top:434px"></div>
<div class="a" style="left:361px;top:423px;width:103px;height:94px;border:5px solid #ee1c24"></div>
<div class="rbtn" style="left:376px;top:433px;width:75px;height:75px;border:1.5px solid #f0b828;background:linear-gradient(#050607,#1a1e22 60%,#22262a 85%,#4a4630)"></div>
<div class="rbtn" style="left:195px;top:556px"></div>
<div class="rbtn" style="left:287px;top:556px"></div>
<div class="rbtn" style="left:376px;top:556px;width:75px;border-right:1px solid #5a5444;border-top:1px solid #4a4a40"></div>
<!-- icons row1 -->
<svg class="a" style="left:195px;top:434px" width="73" height="60" viewBox="0 0 73 60"><defs><linearGradient id="rg1" x1="0" y1="0" x2="1" y2="1"><stop offset="0" stop-color="#c8182a"></stop><stop offset="1" stop-color="#8a0a18"></stop></linearGradient></defs><path d="M21.4 24V40.7L59.6 45.2V22M40.5 24.5V42.8" fill="none" stroke="#c8ccd0" stroke-width="1.3"></path><path d="M9 19.5L23.1 8.9L61.2 14.2L50.4 23.3Z" fill="url(#rg1)"></path><path d="M9 19.5L50.4 23.3L49 26L9 22Z" fill="#e8e8e8"></path><path d="M50.4 23.3L61.5 14.2L61.5 23.3L51 26Z" fill="#f0f0f0"></path></svg>
<svg class="a" style="left:287px;top:434px" width="73" height="60" viewBox="0 0 73 60"><path d="M6.5 38.2L19.7 7.6L66.1 12.5L52.9 44Z" fill="#5a4450"></path><path d="M10 39.5L30.5 19L48 43.5L44 43L30.5 25L15 41.5Z" fill="#f2f2f2"></path><path d="M30.5 20.8L39.6 16.7L47.9 43.2L43 40.7Z" fill="#d0102a"></path></svg>
<svg class="a" style="left:376px;top:433px" width="75" height="60" viewBox="0 0 75 60"><path d="M11.9 21.8L21 9.9L58.3 15.2L53.3 25.1Z" fill="#dc1020"></path><path d="M11.9 21.8L53.3 25.1L44.2 46.7L6.9 41.7Z" fill="#8e0414"></path><path d="M58.3 15.2L67.4 21.5L65.8 23.5L55.3 25.5L45.5 46.8L44.2 46.7L53.3 25.1Z" fill="#d4d8d8"></path></svg>
<div class="t rbl" style="left: 210px; top: 487px; --w: 44; transform: scaleX(0.9167); transform-origin: left center;">庇作成</div>
<div class="t rbl" style="left: 294px; top: 487px; --w: 60; transform: scaleX(0.9375); transform-origin: left center;">部分切妻</div>
<div class="t rbl" style="left: 392px; top: 487px; --w: 44; transform: scaleX(0.9167); transform-origin: left center;">腰折れ</div>
<div class="a" style="left:194px;top:522px;width:257px;height:2px;background:#45494e"></div>
<div class="a" style="left:381px;top:532px;width:15px;height:15px;background:#3a8ee8"></div>
<div class="t" style="left:383.5px;top:533px;font-size:13px;font-weight:bold;color:#fff">?</div>
<div class="t" style="left: 398px; top: 532px; font-size: 15px; color: rgb(114, 170, 240); --w: 60; transform: scaleX(1); transform-origin: left center;">入力方法</div>
<!-- icons row2 -->
<svg class="a" style="left:195px;top:556px" width="73" height="60" viewBox="0 0 73 60"><path d="M9.9 10.2H62.9V43.4H9.9Z" fill="#b00818"></path><path d="M9.9 10.2L33 27.1H46.3L62.9 10.2Z" fill="#88000e"></path><path d="M9.9 43.4L33 27.1H46.3L62.9 43.4Z" fill="#c80c20"></path><path d="M9.9 10.2L33 27.1H46.3L62.9 10.2M9.9 43.4L33 27.1M46.3 27.1L62.9 43.4" fill="none" stroke="#6a0010" stroke-width="0.8"></path><g fill="#f4e818"><circle cx="9" cy="8.9" r="1.9"></circle><circle cx="12.8" cy="12.7" r="1.9"></circle><circle cx="16.6" cy="16.5" r="1.9"></circle><circle cx="20.4" cy="20.3" r="1.9"></circle><circle cx="24.2" cy="24.1" r="1.9"></circle><circle cx="28" cy="27.9" r="1.9"></circle><circle cx="31.7" cy="31.8" r="1.9"></circle></g></svg>
<svg class="a" style="left:287px;top:556px" width="73" height="60" viewBox="0 0 73 60"><defs><linearGradient id="vg" x1="0" y1="0" x2="0" y2="1"><stop offset="0" stop-color="#e01830"></stop><stop offset="1" stop-color="#b00c20"></stop></linearGradient></defs><path d="M6.5 37.1C7 26 9 17.5 14 15.5L55 18C61 19 65 23.5 67 30.5L62.5 30.2C60.5 25 58 23.3 55 23.5C50 24.5 46.5 33 44.3 42Z" fill="url(#vg)"></path><path d="M44.3 42C46.5 32 50 24 55 22.8C60 22 64 25 66.5 30.5" fill="none" stroke="#d8d8d8" stroke-width="1.8"></path></svg>
<svg class="a" style="left:376px;top:556px" width="75" height="60" viewBox="0 0 75 60"><defs><radialGradient id="dg" cx="0.45" cy="0.25" r="0.8"><stop offset="0" stop-color="#f02038"></stop><stop offset="1" stop-color="#a00818"></stop></radialGradient></defs><path d="M9.5 34C9.5 18 22 10.5 37 10.5C52 10.5 65 18 65 34C65 40 52 44.5 37 44.5C22 44.5 9.5 40 9.5 34Z" fill="url(#dg)"></path><path d="M24 14Q40 16 52 13M16 21Q38 26 60 20M11 29Q38 35 64 28" fill="none" stroke="#a8081a" stroke-width="1" opacity="0.8"></path></svg>
<div class="t rbl" style="left: 202px; top: 609px; --w: 60; transform: scaleX(0.9375); transform-origin: left center;">隅補助線</div>
<div class="t rbl" style="left: 295px; top: 609px; --w: 57; transform: scaleX(0.7125); transform-origin: left center;">ヴォールト</div>
<div class="t rbl" style="left: 393px; top: 609px; --w: 40; transform: scaleX(0.8333); transform-origin: left center;">ドーム</div>
<!-- bottom section -->
<div class="a" style="left:174px;top:841px;width:299px;height:1px;background:#3a3e42"></div>
<div class="t" style="left: 183.5px; top: 855px; font-size: 15px; color: rgb(244, 192, 48); --w: 102; transform: scaleX(0.9714); transform-origin: left center;">斜線制限の確認</div>
<div class="a" style="left:195px;top:883px;width:73px;height:72px;background:linear-gradient(#2e3236,#101214 60%,#020202)"></div>
<svg class="a" style="left:195px;top:883px" width="73" height="60" viewBox="0 0 73 60"><path d="M25 4L60 34V49H18V24Z" fill="#50b030" stroke="#80d050" stroke-width="1.2"></path><path d="M25 8L56 35V46H21V25Z" fill="#70c848"></path><path d="M22 36L33 29L44 36Z" fill="#c01818"></path><rect x="24" y="36" width="18" height="12" fill="#e8d8b8"></rect><path d="M32 42L40 38L50 42Z" fill="#c01818"></path><rect x="34" y="42" width="14" height="6" fill="#e8d8b8"></rect></svg>
<div class="t" style="left: 200px; top: 935px; font-size: 15.5px; color: rgb(250, 250, 250); --w: 61; transform: scaleX(0.9531); transform-origin: left center;">斜線確認</div>
<div class="t" style="left: 278px; top: 881px; font-size: 15px; color: rgb(240, 240, 240); --w: 123; transform: scaleX(0.9111); transform-origin: left center;">制限を超える箇所は</div>
<div class="a" style="left:402px;top:881px;width:15px;height:15px;background:#f4f4f4"></div>
<svg class="a" style="left:402px;top:881px" width="15" height="15" viewBox="0 0 15 15"><path d="M2 2L13 13M13 2L2 13" stroke="#e82020" stroke-width="2"></path></svg>
<div class="t" style="left: 418px; top: 881px; font-size: 15px; color: rgb(240, 240, 240); --w: 14; transform: scaleX(0.9333); transform-origin: left center;">が</div>
<div class="t" style="left: 278px; top: 901px; font-size: 15px; color: rgb(240, 240, 240); --w: 84; transform: scaleX(0.8); transform-origin: left center;">表示されます。</div>
<div class="t" style="left: 278px; top: 938px; font-size: 15px; color: rgb(240, 240, 240); --w: 120; transform: scaleX(1); transform-origin: left center;">※要用途地域設定</div>
<!-- CANVAS -->
<div class="a" style="left:474px;top:113px;width:962px;height:856px;background:#1f2328"></div>
<div class="a" style="left:474px;top:118px;width:959px;height:851px;background:#777c80"></div>
<div class="a" style="left:474px;top:118px;width:1px;height:851px;background:#8c92a0"></div>
<div class="a" style="left:1433px;top:113px;width:3px;height:856px;background:#1a1d20"></div>
<div class="a" style="left:1436px;top:113px;width:3px;height:856px;background:#0e1012"></div>
<svg class="a" style="left:474px;top:113px" width="962" height="856" viewBox="474 113 962 856">
<rect x="501" y="144" width="912" height="805" fill="#fff"></rect>
<path d="M550.5 133V142M516.5 138V142M616.5 133V142M583.5 138V142M683.5 133V142M649.5 138V142M750.5 133V142M716.5 138V142M816.5 133V142M783.5 138V142M883.5 133V142M849.5 138V142M950.5 133V142M916.5 138V142M1016.5 133V142M983.5 138V142M1083.5 133V142M1049.5 138V142M1150.5 133V142M1116.5 138V142M1216.5 133V142M1183.5 138V142M1283.5 133V142M1249.5 138V142M1350.5 133V142M1316.5 138V142M1383.5 138V142M490 150.5H499M495 183.5H499M490 217.5H499M495 250.5H499M490 283.5H499M495 317.5H499M490 350.5H499M495 383.5H499M490 417.5H499M495 450.5H499M490 483.5H499M495 517.5H499M490 550.5H499M495 583.5H499M490 617.5H499M495 650.5H499M490 683.5H499M495 717.5H499M490 750.5H499M495 783.5H499M490 817.5H499M495 850.5H499M490 883.5H499M495 917.5H499" stroke="#fff" stroke-width="1.3"></path>
<path d="M501 150.5H1413M501 283.5H1413M501 350.5H1413M501 417.5H1413M501 483.5H1413M501 617.5H1413M501 683.5H1413M501 750.5H1413M501 817.5H1413" stroke="#c4c4c4" stroke-width="1" stroke-dasharray="1 1 2 1 1 2" stroke-dashoffset="2"></path>
<path d="M550.5 144V949M683.5 144V949M750.5 144V949M816.5 144V949M883.5 144V949M1016.5 144V949M1083.5 144V949M1150.5 144V949M1216.5 144V949M1350.5 144V949" stroke="#c4c4c4" stroke-width="1" stroke-dasharray="1 1 2 1 1 2" stroke-dashoffset="7"></path>
<path d="M616.5 144V949M950.5 144V949M1283.5 144V949M501 217.5H1413M501 550.5H1413M501 883.5H1413" stroke="#d0d0d0" stroke-width="1"></path>
<path d="M515 182h2v2h-2zM515 249h2v2h-2zM515 316h2v2h-2zM515 382h2v2h-2zM515 449h2v2h-2zM515 516h2v2h-2zM515 582h2v2h-2zM515 649h2v2h-2zM515 716h2v2h-2zM515 782h2v2h-2zM515 849h2v2h-2zM515 916h2v2h-2zM582 182h2v2h-2zM582 249h2v2h-2zM582 316h2v2h-2zM582 382h2v2h-2zM582 449h2v2h-2zM582 516h2v2h-2zM582 582h2v2h-2zM582 649h2v2h-2zM582 716h2v2h-2zM582 782h2v2h-2zM582 849h2v2h-2zM582 916h2v2h-2zM649 182h2v2h-2zM649 249h2v2h-2zM649 316h2v2h-2zM649 382h2v2h-2zM649 449h2v2h-2zM649 516h2v2h-2zM649 582h2v2h-2zM649 649h2v2h-2zM649 716h2v2h-2zM649 782h2v2h-2zM649 849h2v2h-2zM649 916h2v2h-2zM715 182h2v2h-2zM715 249h2v2h-2zM715 316h2v2h-2zM715 382h2v2h-2zM715 449h2v2h-2zM715 516h2v2h-2zM715 582h2v2h-2zM715 649h2v2h-2zM715 716h2v2h-2zM715 782h2v2h-2zM715 849h2v2h-2zM715 916h2v2h-2zM782 182h2v2h-2zM782 249h2v2h-2zM782 316h2v2h-2zM782 382h2v2h-2zM782 449h2v2h-2zM782 516h2v2h-2zM782 582h2v2h-2zM782 649h2v2h-2zM782 716h2v2h-2zM782 782h2v2h-2zM782 849h2v2h-2zM782 916h2v2h-2zM849 182h2v2h-2zM849 249h2v2h-2zM849 316h2v2h-2zM849 382h2v2h-2zM849 449h2v2h-2zM849 516h2v2h-2zM849 582h2v2h-2zM849 649h2v2h-2zM849 716h2v2h-2zM849 782h2v2h-2zM849 849h2v2h-2zM849 916h2v2h-2zM915 182h2v2h-2zM915 249h2v2h-2zM915 316h2v2h-2zM915 382h2v2h-2zM915 449h2v2h-2zM915 516h2v2h-2zM915 582h2v2h-2zM915 649h2v2h-2zM915 716h2v2h-2zM915 782h2v2h-2zM915 849h2v2h-2zM915 916h2v2h-2zM982 182h2v2h-2zM982 249h2v2h-2zM982 316h2v2h-2zM982 382h2v2h-2zM982 449h2v2h-2zM982 516h2v2h-2zM982 582h2v2h-2zM982 649h2v2h-2zM982 716h2v2h-2zM982 782h2v2h-2zM982 849h2v2h-2zM982 916h2v2h-2zM1049 182h2v2h-2zM1049 249h2v2h-2zM1049 316h2v2h-2zM1049 382h2v2h-2zM1049 449h2v2h-2zM1049 516h2v2h-2zM1049 582h2v2h-2zM1049 649h2v2h-2zM1049 716h2v2h-2zM1049 782h2v2h-2zM1049 849h2v2h-2zM1049 916h2v2h-2zM1115 182h2v2h-2zM1115 249h2v2h-2zM1115 316h2v2h-2zM1115 382h2v2h-2zM1115 449h2v2h-2zM1115 516h2v2h-2zM1115 582h2v2h-2zM1115 649h2v2h-2zM1115 716h2v2h-2zM1115 782h2v2h-2zM1115 849h2v2h-2zM1115 916h2v2h-2zM1182 182h2v2h-2zM1182 249h2v2h-2zM1182 316h2v2h-2zM1182 382h2v2h-2zM1182 449h2v2h-2zM1182 516h2v2h-2zM1182 582h2v2h-2zM1182 649h2v2h-2zM1182 716h2v2h-2zM1182 782h2v2h-2zM1182 849h2v2h-2zM1182 916h2v2h-2zM1249 182h2v2h-2zM1249 249h2v2h-2zM1249 316h2v2h-2zM1249 382h2v2h-2zM1249 449h2v2h-2zM1249 516h2v2h-2zM1249 582h2v2h-2zM1249 649h2v2h-2zM1249 716h2v2h-2zM1249 782h2v2h-2zM1249 849h2v2h-2zM1249 916h2v2h-2zM1315 182h2v2h-2zM1315 249h2v2h-2zM1315 316h2v2h-2zM1315 382h2v2h-2zM1315 449h2v2h-2zM1315 516h2v2h-2zM1315 582h2v2h-2zM1315 649h2v2h-2zM1315 716h2v2h-2zM1315 782h2v2h-2zM1315 849h2v2h-2zM1315 916h2v2h-2zM1382 182h2v2h-2zM1382 249h2v2h-2zM1382 316h2v2h-2zM1382 382h2v2h-2zM1382 449h2v2h-2zM1382 516h2v2h-2zM1382 582h2v2h-2zM1382 649h2v2h-2zM1382 716h2v2h-2zM1382 782h2v2h-2zM1382 849h2v2h-2zM1382 916h2v2h-2z" fill="#c4c4c4"></path>
<rect x="746.5" y="280.5" width="407" height="473" fill="#6b6f72" stroke="#ff0000" stroke-width="1"></rect>
<path d="M747 283.5H1153" stroke="#ff0000" stroke-width="1"></path>
<rect x="754" y="288" width="392" height="458" fill="#e9d9ba"></rect>
<path d="M754 290.5H1146M754 300.5H1146M754 310.5H1146M754 320.5H1146M754 330.5H1146M754 340.5H1146M754 350.5H1146M754 360.5H1146M754 370.5H1146M754 380.5H1146M754 390.5H1146M754 400.5H1146M754 410.5H1146M754 420.5H1146M754 430.5H1146M754 440.5H1146M754 450.5H1146M754 460.5H1146M754 470.5H1146M754 480.5H1146M754 490.5H1146M754 500.5H1146M754 510.5H1146M754 520.5H1146M754 530.5H1146M754 540.5H1146M754 550.5H1146M754 560.5H1146M754 570.5H1146M754 580.5H1146M754 590.5H1146M754 600.5H1146M754 610.5H1146M754 620.5H1146M754 630.5H1146M754 640.5H1146M754 650.5H1146M754 660.5H1146M754 670.5H1146M754 680.5H1146M754 690.5H1146M754 700.5H1146M754 710.5H1146M754 720.5H1146M754 730.5H1146M754 740.5H1146" stroke="#cbbda6" stroke-width="1"></path>
<path d="M816.5 288V746M883.5 288V746M1016.5 288V746M1083.5 288V746M754 350.5H1146M754 417.5H1146M754 483.5H1146M754 617.5H1146M754 683.5H1146" stroke="#d2d0cc" stroke-width="1" stroke-dasharray="1 1 2 1 1 2"></path>
<path d="M950.5 288V746M754 550.5H1146" stroke="#cfccc8" stroke-width="1"></path>
<path d="M782 316h2v2h-2zM782 382h2v2h-2zM782 449h2v2h-2zM782 516h2v2h-2zM782 582h2v2h-2zM782 649h2v2h-2zM782 716h2v2h-2zM849 316h2v2h-2zM849 382h2v2h-2zM849 449h2v2h-2zM849 516h2v2h-2zM849 582h2v2h-2zM849 649h2v2h-2zM849 716h2v2h-2zM915 316h2v2h-2zM915 382h2v2h-2zM915 449h2v2h-2zM915 516h2v2h-2zM915 582h2v2h-2zM915 649h2v2h-2zM915 716h2v2h-2zM982 316h2v2h-2zM982 382h2v2h-2zM982 449h2v2h-2zM982 516h2v2h-2zM982 582h2v2h-2zM982 649h2v2h-2zM982 716h2v2h-2zM1049 316h2v2h-2zM1049 382h2v2h-2zM1049 449h2v2h-2zM1049 516h2v2h-2zM1049 582h2v2h-2zM1049 649h2v2h-2zM1049 716h2v2h-2zM1115 316h2v2h-2zM1115 382h2v2h-2zM1115 449h2v2h-2zM1115 516h2v2h-2zM1115 582h2v2h-2zM1115 649h2v2h-2zM1115 716h2v2h-2z" fill="#c4c8d0"></path>
<text x="755" y="300.5" font-family="Liberation Sans" font-size="16" fill="#8a0a14" stroke="#fff" stroke-width="3" paint-order="stroke" stroke-linejoin="round" transform="translate(755 0) scale(0.95 1) translate(-755 0)">6159.5</text>
<text x="1144" y="300.5" text-anchor="end" font-family="Liberation Sans" font-size="16" fill="#8a0a14" stroke="#fff" stroke-width="3" paint-order="stroke" stroke-linejoin="round" transform="translate(1144 0) scale(0.95 1) translate(-1144 0)">6159.5</text>
<text x="1144" y="743.5" text-anchor="end" font-family="Liberation Sans" font-size="16" fill="#8a0a14" stroke="#fff" stroke-width="3" paint-order="stroke" stroke-linejoin="round" transform="translate(1144 0) scale(0.95 1) translate(-1144 0)">6150.5</text>
<text x="755" y="743.5" font-family="Liberation Sans" font-size="16" fill="#8a0a14" stroke="#fff" stroke-width="3" paint-order="stroke" stroke-linejoin="round" transform="translate(755 0) scale(0.95 1) translate(-755 0)">6150.5</text>
<path d="M746 383.5H1153M950.5 351V469M941.5 384L950.5 351.5L959.5 384" fill="none" stroke="#111" stroke-width="1.2"></path>
<rect x="744" y="381" width="4" height="4" fill="#f00"></rect><rect x="1151" y="381" width="4" height="4" fill="#f00"></rect>
<rect x="742.0" y="276.0" width="9" height="9" fill="#ffff00" stroke="#000" stroke-width="1.5"></rect>
<rect x="1149.0" y="276.0" width="9" height="9" fill="#ffff00" stroke="#000" stroke-width="1.5"></rect>
<rect x="1149.0" y="749.0" width="9" height="9" fill="#ffff00" stroke="#000" stroke-width="1.5"></rect>
<rect x="742.0" y="749.0" width="9" height="9" fill="#ffff00" stroke="#000" stroke-width="1.5"></rect>
<path d="M1207 383.5L1232 371V396Z" fill="#f00"></path>
<path d="M1232 383.5H1307" stroke="#f00" stroke-width="5" stroke-dasharray="5 5"></path>
<path d="M600 636L684 883" stroke="#111" stroke-width="1.2"></path>
<circle cx="576.5" cy="873.5" r="31" fill="none" stroke="#111" stroke-width="1.1"></circle>
<path d="M576.5 844L566.5 901.5Q576.5 904 587 901.5Z" fill="#000"></path>
<path d="M575.3 840V829.5L579 840V829.5" fill="none" stroke="#111" stroke-width="1.2"></path>
<rect x="1413" y="144" width="20" height="825" fill="#f0f0f0"></rect>
<rect x="501" y="949" width="912" height="20" fill="#f0f0f0"></rect>
<rect x="1413" y="536" width="19" height="21" fill="#cdcdcd"></rect>
<rect x="946" y="949" width="21" height="19" fill="#cdcdcd"></rect>
<path d="M1418 157.5L1422.5 152.5L1427 157.5M1418.5 934.5L1422.5 939L1427 934.5M515 954L510.5 958.5L515 963M1398.5 954L1403 958.5L1398.5 963" fill="none" stroke="#555" stroke-width="1.8"></path>
</svg>
<!-- DIALOG -->
<div class="a" style="left:586px;top:468px;width:539px;height:293px;background:#f0f0f0;border:1px solid #6e6e6e;box-shadow:0 0 12px 3px rgba(0,0,0,0.22)"></div>
<div class="a" style="left:587px;top:469px;width:537px;height:37px;background:#fff"></div>
<div class="t" style="left: 597px; top: 480px; font-size: 15px; color: rgb(0, 0, 0); --w: 58.5; transform: scaleX(0.975); transform-origin: left center;">勾配設定</div>
<svg class="a" style="left:1096px;top:480px" width="14" height="14" viewBox="0 0 14 14"><path d="M1 1L13 13M13 1L1 13" stroke="#111" stroke-width="1.2"></path></svg>
<div class="a" style="left:599px;top:520px;width:275px;height:223px;background:#fff;border-style:solid;border-width:3px 2px 2px 3px;border-color:#a0a0a0 #fff #fff #a0a0a0"></div>
<div class="a" style="left:602px;top:523px;width:1px;height:218px;background:#696969"></div>
<div class="a" style="left:602px;top:523px;width:270px;height:1px;background:#696969"></div>
<svg class="a" style="left:600px;top:520px" width="274" height="223" viewBox="600 520 274 223"><rect x="649.5" y="529.5" width="175" height="204" fill="none" stroke="#000" stroke-width="1.3"></rect><path d="M650 573.5H824" stroke="#e00000" stroke-width="1.2"></path><path d="M731.5 567V552H737Q741 552 741 555.5Q741 559 737 559.5H731.5M737 559.5Q742 560 742 563Q742 567 737 567H731.5" fill="none" stroke="#000" stroke-width="1.1"></path><path d="M730 597.5L736.5 581.5L743 597.5M732.3 592H740.7" fill="none" stroke="#000" stroke-width="1.1"></path></svg>
<div class="t" style="left: 882px; top: 553px; font-size: 14px; color: rgb(17, 17, 17); --w: 41; transform: scaleX(0.9943); transform-origin: left center;">勾配A:</div>
<div class="t" style="left: 882px; top: 601px; font-size: 14px; color: rgb(17, 17, 17); --w: 41; transform: scaleX(0.9943); transform-origin: left center;">勾配B:</div>
<div class="a" style="left:930px;top:548px;width:88px;height:28px;background:#fff;border:1px solid #7a7a7a"></div>
<div class="a" style="left:997px;top:549px;width:20px;height:26px;background:#f0f0f0;border-left:1px solid #d0d0d0"></div>
<div class="a" style="left:998px;top:561px;width:19px;height:1px;background:#c8c8c8"></div>
<div class="a" style="left:1002px;top:554px;width:0;height:0;border-left:5px solid transparent;border-right:5px solid transparent;border-bottom:5px solid #111"></div>
<div class="a" style="left:1002px;top:565px;width:0;height:0;border-left:5px solid transparent;border-right:5px solid transparent;border-top:5px solid #111"></div>
<div class="t" style="left:934px;top:553px;font-size:13px;color:#000">0.1</div>
<div class="a" style="left:930px;top:596px;width:88px;height:28px;background:#fff;border:1px solid #7a7a7a"></div>
<div class="a" style="left:997px;top:597px;width:20px;height:26px;background:#f0f0f0;border-left:1px solid #d0d0d0"></div>
<div class="a" style="left:998px;top:609px;width:19px;height:1px;background:#c8c8c8"></div>
<div class="a" style="left:1002px;top:602px;width:0;height:0;border-left:5px solid transparent;border-right:5px solid transparent;border-bottom:5px solid #111"></div>
<div class="a" style="left:1002px;top:613px;width:0;height:0;border-left:5px solid transparent;border-right:5px solid transparent;border-top:5px solid #111"></div>
<div class="t" style="left:934px;top:601px;font-size:13px;color:#000">12</div>
<div class="t" style="left:1021px;top:558px;font-size:14px;color:#111">寸</div>
<div class="t" style="left:1021px;top:606px;font-size:14px;color:#111">寸</div>
<div class="t" style="left: 1053.5px; top: 559px; font-size: 12.5px; color: rgb(17, 17, 17); --w: 38; transform: scaleX(1.0091); transform-origin: left center;">(0.57°)</div>
<div class="t" style="left: 1053.5px; top: 606px; font-size: 12.5px; color: rgb(17, 17, 17); --w: 45.5; transform: scaleX(1.02); transform-origin: left center;">(50.19°)</div>
<div class="a" style="left:903px;top:717px;width:86px;height:26px;background:#e1e1e1;border:2px solid #0078d7"></div>
<div class="a" style="left:906px;top:720px;width:80px;height:20px;border:1px dotted #111"></div>
<div class="t" style="left:937px;top:723px;font-size:13.5px;color:#000">OK</div>
<div class="a" style="left:1008px;top:717px;width:86px;height:26px;background:#e1e1e1;border:1px solid #adadad"></div>
<div class="t" style="left: 1021px; top: 722px; font-size: 14px; color: rgb(0, 0, 0); --w: 57; transform: scaleX(0.8143); transform-origin: left center;">キャンセル</div>
<!-- HELP PANEL -->
<div class="a" style="left:1439px;top:113px;width:250px;height:856px;background:#1f2328"></div>
<div class="a" style="left:1688px;top:113px;width:1px;height:856px;background:#2a2e33"></div>
<div class="t" style="left: 1448px; top: 119px; font-size: 15px; color: rgb(244, 244, 244); --w: 118; transform: scaleX(0.9833); transform-origin: left center;">手動屋根入力手順</div>
<div class="a" style="left:1658px;top:115px;width:22px;height:23px;border:1px solid #6a6d72"></div>
<div class="a" style="left:1659px;top:116px;width:20px;height:21px;border:2px solid #e6e6e6;background:#1f2328"></div>
<div class="a" style="left:1674px;top:118px;width:4px;height:17px;background:#f0b820"></div>
<div class="a" style="left:1663px;top:120px;width:0;height:0;border-top:6px solid transparent;border-bottom:6px solid transparent;border-left:7px solid #dde0ea"></div>
<div class="a" style="left:1439px;top:142px;width:249px;height:1px;background:#6b6f73"></div>
<div class="hn" style="top:157px">1.</div>
<div class="hl" style="top: 157px; --w: 156; transform: scaleX(0.8); transform-origin: left center;">「手動作成」ボタンを押す。</div>
<div class="hn" style="top:179px">2.</div>
<div class="hl" style="top: 179px; --w: 196.5; transform: scaleX(0.8431); transform-origin: left center;">最初に<b>軒先になる2点</b>から<b>左クリッ</b></div>
<div class="hl" style="top: 200px; --w: 194.5; transform: scaleX(0.8644); transform-origin: left center;"><b>ク</b>で入力していき、屋根面を一面</div>
<div class="hl" style="top: 220.5px; --w: 38.5; transform: scaleX(0.8556); transform-origin: left center;">作成。</div>
<svg class="a" style="left:1476px;top:240px" width="194" height="136" viewBox="0 0 194 136"><rect x="0.5" y="0.5" width="193" height="135" fill="#eff3f8" stroke="#9aa0a6"></rect><rect x="60" y="21.8" width="74" height="46" fill="#d6bea2" stroke="#807870" stroke-width="3"></rect><path d="M46 81.3L84 43.4H110L147.3 81.3" fill="none" stroke="#dc1010" stroke-width="2.2" stroke-linecap="round" stroke-dasharray="0 3.8"></path><rect x="45.3" y="83.8" width="102.7" height="7.2" fill="#e01010"></rect><rect x="36.9" y="83.3" width="8.4" height="8.4" fill="#f4c030" stroke="#8a8a8a" stroke-width="1.8"></rect><rect x="148.5" y="83.3" width="8.4" height="8.4" fill="#f4c030" stroke="#8a8a8a" stroke-width="1.8"></rect><circle cx="23.8" cy="75.4" r="9" fill="none" stroke="#333" stroke-width="1"></circle><text x="20.3" y="80.5" font-family="Liberation Sans" font-size="13" fill="#333">1</text><circle cx="169.9" cy="75.4" r="9" fill="none" stroke="#333" stroke-width="1"></circle><text x="166.2" y="80.5" font-family="Liberation Sans" font-size="13" fill="#333">2</text><g transform="translate(31.2 98.9)"><path d="M0.8 0.8H17.8V21Q17.8 26 13 26H5.6Q0.8 26 0.8 21Z" fill="#e2e6ee" stroke="#4a4a4a" stroke-width="1.3"></path><rect x="1.5" y="1.5" width="7" height="7.5" fill="#f8a818"></rect><rect x="9.5" y="1.5" width="7.5" height="7.5" fill="#f2f2f2"></rect><path d="M1 9.5H17.5" stroke="#666" stroke-width="1"></path></g><g transform="translate(144.3 98.9)"><path d="M0.8 0.8H17.8V21Q17.8 26 13 26H5.6Q0.8 26 0.8 21Z" fill="#e2e6ee" stroke="#4a4a4a" stroke-width="1.3"></path><rect x="1.5" y="1.5" width="7" height="7.5" fill="#f8a818"></rect><rect x="9.5" y="1.5" width="7.5" height="7.5" fill="#f2f2f2"></rect><path d="M1 9.5H17.5" stroke="#666" stroke-width="1"></path></g><path d="M55.8 111H133" stroke="#70b0f8" stroke-width="2"></path><path d="M138.5 111L131.5 104.5V117.5Z" fill="#70b0f8"></path></svg>
<div class="hn" style="top:382px">3.</div>
<div class="hl" style="top: 382px; --w: 184; transform: scaleX(0.8178); transform-origin: left center;">基準位置を<b>左クリック</b>で指定し、</div>
<div class="hl" style="top: 403px; --w: 166; transform: scaleX(0.8327); transform-origin: left center;">勾配とGLからの高さを入力。</div>
<div class="hl" style="top: 423.5px; --w: 194.5; transform: scaleX(1.0255); transform-origin: left center;"><b>※位置は任意(通常は軒桁)。</b></div>
<div class="hl" style="top: 444px; --w: 195; transform: scaleX(0.9286); transform-origin: left center;">※軒先から基準位置の距離を数</div>
<div class="hl" style="top: 465px; --w: 195; transform: scaleX(0.9286); transform-origin: left center;">値指定する場合は、適当な箇所</div>
<div class="hl" style="top: 485.5px; --w: 182; transform: scaleX(0.8089); transform-origin: left center;">を<b>右クリック</b>し、各数値を入力。</div>
<svg class="a" style="left:1476px;top:505px" width="194" height="136" viewBox="0 0 194 136"><rect x="0.5" y="0.5" width="193" height="135" fill="#eff3f8" stroke="#9aa0a6"></rect><path d="M47.5 91.7V25.5H146.5V91.7" fill="#d6bea2" stroke="#807870" stroke-width="3"></path><path d="M46 87.3H148V96.2H46Z" fill="#e01010"></path><path d="M22.3 116.3L80.3 58.7H113.8L171.8 116.3Z" fill="none" stroke="#0a6cc0" stroke-width="2.5"></path><rect x="52" y="96.2" width="91" height="2" fill="#eff3f8"></rect><g transform="translate(87.5 91.7) scale(0.95)"><path d="M0.8 0.8H17.8V21Q17.8 26 13 26H5.6Q0.8 26 0.8 21Z" fill="#e2e6ee" stroke="#4a4a4a" stroke-width="1.3"></path><rect x="1.5" y="1.5" width="7" height="7.5" fill="#f8a818"></rect><rect x="9.5" y="1.5" width="7.5" height="7.5" fill="#f2f2f2"></rect><path d="M1 9.5H17.5" stroke="#666" stroke-width="1"></path></g></svg>
<div class="hn" style="top:647px">4.</div>
<div class="hl" style="top: 647px; --w: 194; transform: scaleX(0.8579); transform-origin: left center;">1～3を繰り返して、残りの屋根面</div>
<div class="hl" style="top: 667.5px; --w: 44; transform: scaleX(0.7333); transform-origin: left center;">を作成。</div>
<svg class="a" style="left:1445px;top:691px" width="25" height="25" viewBox="0 0 25 25"><rect width="25" height="25" fill="#169aa0"></rect><path d="M8 17L16 8Q19 5 21 7.5Q23 10 20 13L12 21Q8 24 5.5 21.5Q3 19 6 15L13 7" fill="none" stroke="#f4f4f4" stroke-width="1.8"></path></svg>
<div class="hl" style="top: 694px; --w: 189; transform: scaleX(0.9); transform-origin: left center;"><b>入力途中で取り消す場合は「作</b></div>
<div class="hl" style="top: 715px; --w: 133; transform: scaleX(0.8061); transform-origin: left center;"><b>成中止」ボタンを押す。</b></div>
<script>
(function(){var els=document.querySelectorAll('[style*="--w:"]');for(var i=0;i<els.length;i++){var e=els[i];var m=e.getAttribute('style').match(/--w:\s*([\d.]+)/);if(!m)continue;var w=parseFloat(m[1]);e.style.transform='none';var r=e.getBoundingClientRect();if(r.width>0){e.style.transformOrigin='left center';e.style.transform='scaleX('+(w/r.width).toFixed(4)+')';}}})();
</script></body></html>
